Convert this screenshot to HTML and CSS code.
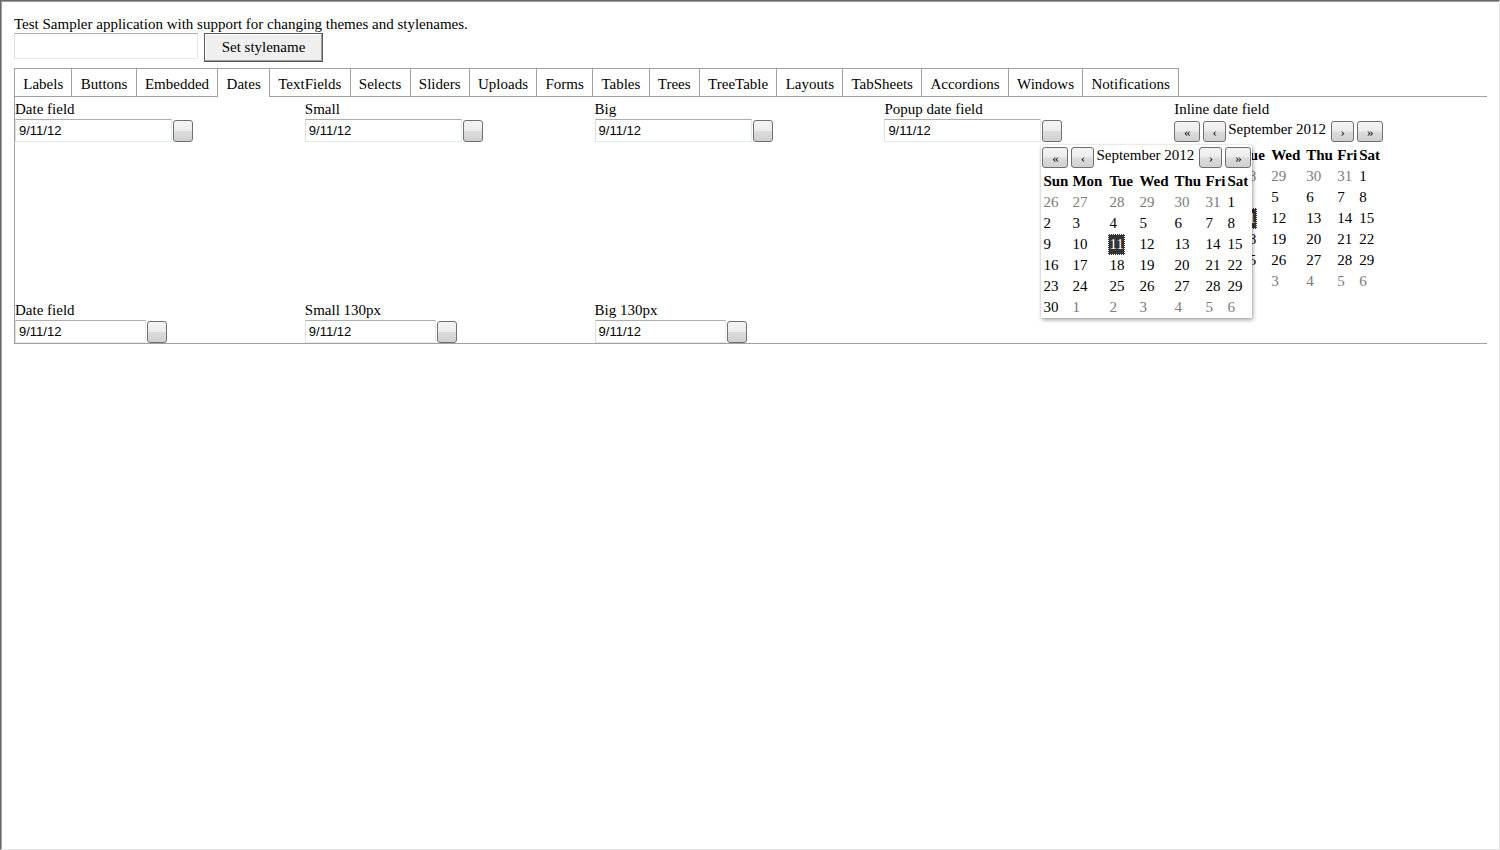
FILE: index.html
```html
<!DOCTYPE html>
<html>
<head>
<meta charset="utf-8">
<title>Test Sampler</title>
<link rel="stylesheet" href="styles.css">
</head>
<body>
<div class="frame">
  <div class="intro">Test Sampler application with support for changing themes and stylenames.</div>
  <div class="stylerow">
    <input class="style-input" type="text">
    <button class="style-btn" type="button">Set stylename</button>
  </div>

  <div class="tabs">
    <div class="tab">Labels</div>
    <div class="tab">Buttons</div>
    <div class="tab">Embedded</div>
    <div class="tab sel">Dates</div>
    <div class="tab">TextFields</div>
    <div class="tab">Selects</div>
    <div class="tab">Sliders</div>
    <div class="tab">Uploads</div>
    <div class="tab">Forms</div>
    <div class="tab">Tables</div>
    <div class="tab">Trees</div>
    <div class="tab">TreeTable</div>
    <div class="tab">Layouts</div>
    <div class="tab">TabSheets</div>
    <div class="tab">Accordions</div>
    <div class="tab">Windows</div>
    <div class="tab">Notifications</div>
  </div>

  <div class="panel">
    <div class="grid">
      <div class="cell">
        <div class="caption">Date field</div>
        <div class="datefield"><input class="df-input" type="text" value="9/11/12" readonly><span class="df-btn"></span></div>
      </div>
      <div class="cell">
        <div class="caption">Small</div>
        <div class="datefield"><input class="df-input" type="text" value="9/11/12" readonly><span class="df-btn"></span></div>
      </div>
      <div class="cell">
        <div class="caption">Big</div>
        <div class="datefield"><input class="df-input" type="text" value="9/11/12" readonly><span class="df-btn"></span></div>
      </div>
      <div class="cell">
        <div class="caption">Popup date field</div>
        <div class="datefield"><input class="df-input" type="text" value="9/11/12" readonly><span class="df-btn"></span>
          <div class="popup">
            <div class="cal">
              <div class="cal-head">
                <span class="nav wide">&laquo;</span><span class="nav gap2">&lsaquo;</span><span class="month">September 2012</span><span class="nav gap2l">&rsaquo;</span><span class="nav wide gap3l">&raquo;</span>
              </div>
              <table class="days">
                <colgroup><col class="c1"><col class="c2"><col class="c3"><col class="c4"><col class="c5"><col class="c6"><col class="c7"></colgroup>
                <tr class="wk"><th>Sun</th><th>Mon</th><th>Tue</th><th>Wed</th><th>Thu</th><th>Fri</th><th>Sat</th></tr>
                <tr><td class="o">26</td><td class="o">27</td><td class="o">28</td><td class="o">29</td><td class="o">30</td><td class="o">31</td><td>1</td></tr>
                <tr><td>2</td><td>3</td><td>4</td><td>5</td><td>6</td><td>7</td><td>8</td></tr>
                <tr><td>9</td><td>10</td><td><span class="selday">11</span></td><td>12</td><td>13</td><td>14</td><td>15</td></tr>
                <tr><td>16</td><td>17</td><td>18</td><td>19</td><td>20</td><td>21</td><td>22</td></tr>
                <tr><td>23</td><td>24</td><td>25</td><td>26</td><td>27</td><td>28</td><td>29</td></tr>
                <tr><td>30</td><td class="o">1</td><td class="o">2</td><td class="o">3</td><td class="o">4</td><td class="o">5</td><td class="o">6</td></tr>
              </table>
            </div>
          </div>
        </div>
      </div>
      <div class="cell">
        <div class="caption">Inline date field</div>
        <div class="cal inline">
          <div class="cal-head">
            <span class="nav wide">&laquo;</span><span class="nav gap2">&lsaquo;</span><span class="month">September 2012</span><span class="nav gap2l">&rsaquo;</span><span class="nav wide gap3l">&raquo;</span>
          </div>
          <table class="days">
            <colgroup><col class="c1"><col class="c2"><col class="c3"><col class="c4"><col class="c5"><col class="c6"><col class="c7"></colgroup>
            <tr class="wk"><th>Sun</th><th>Mon</th><th>Tue</th><th>Wed</th><th>Thu</th><th>Fri</th><th>Sat</th></tr>
            <tr><td class="o">26</td><td class="o">27</td><td class="o">28</td><td class="o">29</td><td class="o">30</td><td class="o">31</td><td>1</td></tr>
            <tr><td>2</td><td>3</td><td>4</td><td>5</td><td>6</td><td>7</td><td>8</td></tr>
            <tr><td>9</td><td>10</td><td><span class="selday">11</span></td><td>12</td><td>13</td><td>14</td><td>15</td></tr>
            <tr><td>16</td><td>17</td><td>18</td><td>19</td><td>20</td><td>21</td><td>22</td></tr>
            <tr><td>23</td><td>24</td><td>25</td><td>26</td><td>27</td><td>28</td><td>29</td></tr>
            <tr><td>30</td><td class="o">1</td><td class="o">2</td><td class="o">3</td><td class="o">4</td><td class="o">5</td><td class="o">6</td></tr>
          </table>
        </div>
      </div>

      <div class="cell">
        <div class="caption">Date field</div>
        <div class="datefield"><input class="df-input narrow" type="text" value="9/11/12" readonly><span class="df-btn"></span></div>
      </div>
      <div class="cell">
        <div class="caption">Small 130px</div>
        <div class="datefield"><input class="df-input narrow" type="text" value="9/11/12" readonly><span class="df-btn"></span></div>
      </div>
      <div class="cell">
        <div class="caption">Big 130px</div>
        <div class="datefield"><input class="df-input narrow" type="text" value="9/11/12" readonly><span class="df-btn"></span></div>
      </div>
    </div>
  </div>
</div>
</body>
</html>
```

FILE: styles.css
```css
html, body {
  margin: 0;
  padding: 0;
  background: #fff;
}

body {
  font-family: "Liberation Serif", "Times New Roman", serif;
  font-size: 15px;
  color: #000;
}

.frame {
  box-sizing: border-box;
  width: 1500px;
  height: 850px;
  overflow: hidden;
  border-top: 1px solid #6a6a6a;
  border-left: 1px solid #6a6a6a;
  border-right: 1px solid #e3e3e3;
  border-bottom: 1px solid #e3e3e3;
  box-shadow: inset 1px 1px 0 #a0a0a0;
  padding: 14px 0 0 13px;
}

.intro {
  line-height: 18px;
  height: 18px;
  white-space: nowrap;
}

.stylerow {
  display: flex;
  align-items: flex-start;
}

.style-input {
  box-sizing: border-box;
  width: 184px;
  height: 26px;
  margin: 0;
  padding: 0 3px;
  border: 1px solid #e3e9ef;
  border-top-color: #abadb3;
  border-left-color: #dbdfe6;
  font: 13px "Liberation Sans", Arial, sans-serif;
}

.style-btn {
  box-sizing: border-box;
  width: 119px;
  height: 29px;
  margin: 0 0 0 6px;
  padding: 0;
  border: 1px solid #5a5a5a;
  box-shadow: inset -1px -1px 0 #a0a0a0, inset 1px 1px 0 #fff;
  background: #efefef;
  font-family: "Liberation Serif", "Times New Roman", serif;
  font-size: 15px;
  color: #000;
}

.tabs {
  display: flex;
  margin-top: 6px;
  position: relative;
  z-index: 1;
}

.tab {
  border-top: 1px solid #a0a0a0;
  border-right: 1px solid #a0a0a0;
  padding: 3px 8.25px 0;
  height: 24px;
  line-height: 24px;
  white-space: nowrap;
  background: #fff;
}

.tab:first-child {
  border-left: 1px solid #a0a0a0;
}

.tab.sel {
  height: 25px;
  margin-bottom: -1px;
}

.panel {
  box-sizing: border-box;
  width: 1473px;
  border-top: 1px solid #a0a0a0;
  border-left: 1px solid #a0a0a0;
  border-bottom: 1px solid #a0a0a0;
}

.grid {
  display: grid;
  grid-template-columns: repeat(5, 289.8px);
  row-gap: 6px;
  align-items: start;
}

.caption {
  padding-top: 2px;
  line-height: 20px;
  height: 20px;
  white-space: nowrap;
}

.datefield {
  position: relative;
  display: flex;
  align-items: flex-start;
}

.df-input {
  box-sizing: border-box;
  width: 157px;
  height: 23px;
  margin: 0;
  padding: 0 3px;
  border: 1px solid #e3e9ef;
  border-top-color: #abadb3;
  border-left-color: #dbdfe6;
  font: 13px "Liberation Sans", Arial, sans-serif;
  color: #000;
  background: #fff;
}

.df-input.narrow {
  width: 131px;
}

.df-btn {
  box-sizing: border-box;
  width: 20px;
  height: 22px;
  margin: 1px 0 0 1px;
  border: 1px solid #707070;
  border-radius: 3px;
  background: linear-gradient(#f4f4f4 0%, #ececec 48%, #dcdcdc 52%, #d0d0d0 100%);
}

.popup {
  position: absolute;
  left: 157px;
  top: 26px;
  z-index: 5;
  box-sizing: border-box;
  width: 211px;
  height: 173px;
  padding: 2px 0 0 1px;
  background: #fff;
  box-shadow: 1px 2px 4px rgba(0, 0, 0, 0.35), 0 0 1px rgba(0, 0, 0, 0.25);
}

.cal.inline {
  padding-top: 2px;
}

.cal-head {
  display: flex;
  align-items: flex-start;
  height: 21px;
  margin-bottom: 3px;
  white-space: nowrap;
}

.nav {
  box-sizing: border-box;
  display: block;
  width: 23px;
  height: 21px;
  padding-top: 2px;
  border: 1px solid #707070;
  border-radius: 3px;
  background: linear-gradient(#f4f4f4 0%, #ececec 48%, #dcdcdc 52%, #d0d0d0 100%);
  font-size: 13px;
  line-height: 16px;
  text-align: center;
  color: #000;
}

.nav.wide {
  width: 26px;
  margin-right: 3px;
}

.nav.gap2 {
  margin-right: 2px;
}

.nav.gap2l {
  margin-left: 2px;
}

.nav.wide.gap3l {
  margin: 0 0 0 3px;
}

.month {
  width: 101px;
  line-height: 18px;
  margin-top: -1px;
}

.days {
  table-layout: fixed;
  border-collapse: separate;
  border-spacing: 0;
  width: 208px;
  margin-left: 1px;
}

.c1 { width: 29px; }
.c2 { width: 37px; }
.c3 { width: 30px; }
.c4 { width: 35px; }
.c5 { width: 31px; }
.c6 { width: 22px; }
.c7 { width: 24px; }

.days th,
.days td {
  padding: 0;
  height: 21px;
  line-height: 21px;
  text-align: left;
  white-space: nowrap;
  overflow: visible;
  font-size: 15px;
}

.days th {
  font-weight: bold;
}

.days td.o {
  color: #7b7b7b;
}

.selday {
  display: inline-block;
  padding: 0 1px;
  margin-left: -1px;
  line-height: 21px;
  background: #333;
  color: #fff;
  outline: 1px dotted #fff;
  outline-offset: -1px;
}
```
